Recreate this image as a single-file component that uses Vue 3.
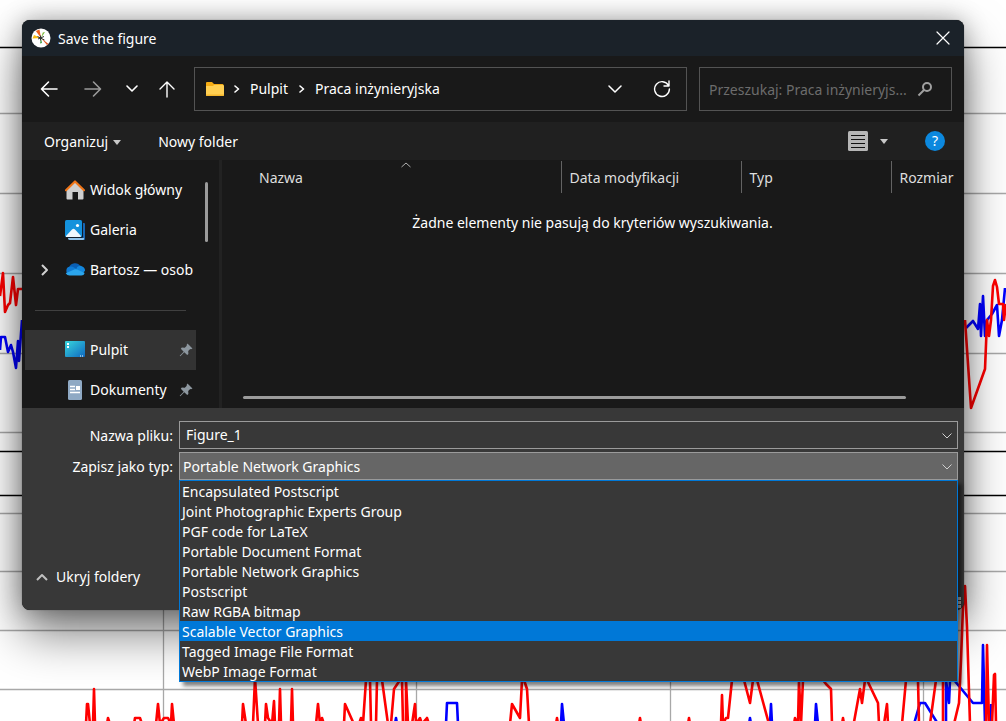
<script setup>
import { ref } from 'vue'

const fileName = ref('Figure_1')
const search = ref('')
const formats = [
  'Encapsulated Postscript',
  'Joint Photographic Experts Group',
  'PGF code for LaTeX',
  'Portable Document Format',
  'Portable Network Graphics',
  'Postscript',
  'Raw RGBA bitmap',
  'Scalable Vector Graphics',
  'Tagged Image File Format',
  'WebP Image Format',
]
const selected = ref('Portable Network Graphics')
const highlighted = ref('Scalable Vector Graphics')

const gridRows = [113, 193, 273, 353, 432, 513, 571, 630, 689]
const gridColumns = [163, 416, 670, 923]
const axisRows = [47, 451, 495]

const redLines = [
  '0,296 3,273 5,312 8,305 10,303 13,277 16,305 18,289 24,289',
  '965,320 971,408 985,369 987,320 989,336 991,320 993,286 995,280 997,287 999,304 1003,304 1004,320 1006,304',
  '86,724 87,704 88,704 90,724 93,724 94,689 95,724 107,724 108,718 110,724 134,724 135,718 140,718 142,724 156,724 158,704 160,724 164,718 168,718 171,724 172,704 174,724',
  '242,724 243,704 246,724 253,724 255,678 258,724 265,724 266,704 268,718 272,724 274,701 275,724 279,724 280,689 281,724 291,724 292,689 293,724',
  '316,724 318,704 320,724 322,718 324,724 344,724 345,704 353,722 359,724 361,718 363,724 366,680 370,680 371,724 376,724 377,680 382,680 388,724 391,724 394,689 400,680 402,680 403,724 406,724 406,680 408,724 412,724 415,704 416,724 420,718 422,724 427,718 429,724',
  '510,724 512,704 520,718 522,680 524,680 527,689 529,724 556,724 557,718 558,724',
  '639,724 640,718 641,724 688,724 689,718 690,724 721,724 722,695 723,724 726,718 728,718 732,680 744,680 750,703 753,680 757,680 769,724',
  '794,724 795,718 798,724 799,680 801,724 803,680 823,680 826,684 831,689 832,724 842,724 843,718 844,724 854,722 860,689 862,703 865,680 867,680 878,703 879,724 884,724 887,704 888,724 902,724 906,680 918,680 919,724 930,724 936,680 943,680 943,724',
  '954,724 959,703 961,660 963,607 965,586 967,627 970,724',
  '986,724 987,645 989,724 992,724 994,675 995,674 996,724',
]
const blueLines = [
  '0,350 1,337 5,337 8,352 11,345 13,352 16,368 18,341 19,361 22,320',
  '966,328 973,321 978,329 980,304 981,336 983,296 985,336 987,320 992,314 997,305 999,336 1002,320 1005,288',
  '395,724 396,718 397,724 446,724 447,703 457,703 458,724 561,724 562,704 564,724',
  '749,724 750,718 751,724 770,724 771,704 772,724 815,724 816,704 818,724',
  '914,724 920,703 925,703 938,724 946,724 946,680 949,703 950,680 954,680 973,703 982,703 983,645 985,724 990,724 991,704',
]
</script>

<template>
  <main class="desktop">
    <svg class="plot" viewBox="0 0 1006 721" preserveAspectRatio="xMidYMid slice" aria-hidden="true">
      <g stroke="#a8a8a8" stroke-width="1.300">
        <line v-for="y in gridRows" :key="'r' + y" x1="0" x2="1006" :y1="y + 0.5" :y2="y + 0.5" />
        <line v-for="x in gridColumns" :key="'c' + x" :x1="x + 0.5" :x2="x + 0.5" y1="495" y2="721" />
      </g>
      <g stroke="#000" stroke-width="1.300">
        <line v-for="y in axisRows" :key="'a' + y" x1="0" x2="1006" :y1="y + 0.5" :y2="y + 0.5" />
      </g>
      <g fill="none" stroke-width="2.600" stroke-linejoin="round">
        <polyline v-for="(p, i) in blueLines" :key="'b' + i" :points="p" stroke="#00f" />
        <polyline v-for="(p, i) in redLines" :key="'l' + i" :points="p" stroke="#f00" />
      </g>
    </svg>

    <section class="dialog" role="dialog" aria-labelledby="dialog-title">
      <header class="titlebar">
        <svg class="app-icon" viewBox="0 0 20 20" aria-hidden="true">
          <circle cx="10" cy="10" r="9.500" fill="#fff" />
          <path d="M10 10 4.800 3 8.500 1.400Z" fill="#f0601a" />
          <path d="M10 10 1.500 10.500 3 7Z" fill="#fbbd12" />
          <path d="M10 10 11.800 4.500 14 4Z" fill="#7cb83c" />
          <path d="m10 10 7.500 6-1.500 1Z" fill="#e2551c" />
          <path d="m10 10-1 5.500 2-.5Z" fill="#4aa04a" />
          <path d="m6.500 8.500 7 3.500M7 11l6-2.500M9.500 7.500v5" stroke="#333" stroke-width="1" fill="none" />
        </svg>
        <h1 id="dialog-title">Save the figure</h1>
        <button class="icon-button close" aria-label="Close">
          <svg width="14" height="14" viewBox="0 0 14 14"><path d="m1 1 12 12M13 1 1 13" /></svg>
        </button>
      </header>

      <nav class="navbar" aria-label="Location">
        <div class="history">
          <button class="icon-button" aria-label="Back">
            <svg width="18" height="18" viewBox="0 0 18 18"><path d="M17 9H2M8.500 2 1.500 9l7 7" stroke-width="1.600" /></svg>
          </button>
          <button class="icon-button dim" aria-label="Forward">
            <svg width="18" height="18" viewBox="0 0 18 18"><path d="M1 9h15M9.500 2l7 7-7 7" stroke-width="1.600" /></svg>
          </button>
          <button class="icon-button narrow" aria-label="Recent locations">
            <svg width="12" height="8" viewBox="0 0 12 8"><path d="m1 1 5 5 5-5" stroke-width="1.600" /></svg>
          </button>
          <button class="icon-button" aria-label="Up">
            <svg width="18" height="18" viewBox="0 0 18 18"><path d="M9 17V2M2 9l7-7 7 7" stroke-width="1.400" /></svg>
          </button>
        </div>
        <div class="address">
          <svg width="20" height="16" viewBox="0 0 20 16" aria-hidden="true">
            <path d="M1 2a1 1 0 0 1 1-1h5l2 2h8.500a1 1 0 0 1 1 1v9H1Z" fill="#f5ac14" />
            <path d="M1 5h7l1-1h9a1 1 0 0 1 1 1v9a1 1 0 0 1-1 1H2a1 1 0 0 1-1-1Z" fill="#ffcf52" />
            <path d="M1 13v1a1 1 0 0 0 1 1h16a1 1 0 0 0 1-1v-.5H1Z" fill="#f4b62c" />
          </svg>
          <svg class="crumb-arrow" width="6" height="8" viewBox="0 0 6 8"><path d="m1 1 3.500 3L1 7" stroke-width="1.600" /></svg>
          <a href="#pulpit">Pulpit</a>
          <svg class="crumb-arrow second" width="6" height="8" viewBox="0 0 6 8"><path d="m1 1 3.500 3L1 7" stroke-width="1.600" /></svg>
          <a href="#praca">Praca inżynieryjska</a>
          <button class="icon-button drop" aria-label="Previous locations">
            <svg width="14" height="9" viewBox="0 0 14 9"><path d="m1 1 6 6 6-6" stroke-width="1.500" /></svg>
          </button>
          <button class="icon-button refresh" aria-label="Refresh">
            <svg width="18" height="18" viewBox="0 0 18 18"><path d="M15.500 5.500A7.400 7.400 0 1 0 16.400 9M16 1v5h-5" stroke-width="1.400" /></svg>
          </button>
        </div>
        <label class="search">
          <input v-model="search" type="text" aria-label="Search" placeholder="Przeszukaj: Praca inżynieryjs..." />
          <svg width="16" height="16" viewBox="0 0 16 16"><circle cx="10" cy="6" r="4" /><path d="M7 9 1.500 14.500" /></svg>
        </label>
      </nav>

      <div class="toolbar">
        <button class="tool">Organizuj <span class="caret"></span></button>
        <button class="tool">Nowy folder</button>
        <button class="view" aria-label="Change view">
          <svg width="20" height="20" viewBox="0 0 20 20">
            <rect width="20" height="20" rx="1.500" fill="#b6b6b6" />
            <path d="M3 4.500h14M3 8.500h14M3 12.500h14M3 16.500h14" stroke="#111" />
          </svg>
          <span class="caret"></span>
        </button>
        <button class="help" aria-label="Help">?</button>
      </div>

      <div class="browser">
        <aside class="tree">
          <ul>
            <li>
              <svg class="expander"></svg>
              <svg class="glyph" viewBox="0 0 20 20" aria-hidden="true">
                <path d="M1.500 9 10 2l8.500 7v9.500a1 1 0 0 1-1 1H13V12H7.500v7.500h-5a1 1 0 0 1-1-1Z" fill="#cfcfcf" />
                <path d="M1 10.200 10 1.500l9 8.700" fill="none" stroke="#ef7417" stroke-width="2.200" stroke-linecap="round" stroke-linejoin="round" />
              </svg>
              <a href="#home">Widok główny</a>
            </li>
            <li>
              <svg class="expander"></svg>
              <svg class="glyph" viewBox="0 0 20 20" aria-hidden="true">
                <path d="M4 3h15a1 1 0 0 1 1 1v15a1 1 0 0 1-1 1H5a2 2 0 0 1-2-2Z" fill="#1767b5" />
                <path d="M3 18h16v1a1 1 0 0 1-1 1H5a2 2 0 0 1-2-2Z" fill="#8fc3ea" />
                <rect width="18" height="18" rx="1.500" fill="#111d2a" />
                <rect width="17" height="17" rx="1.500" fill="#1492dc" />
                <path d="m1 16 6-6.500a2 2 0 0 1 3 0l6 6.500-.5 1H1Z" fill="#eef7fd" />
                <circle cx="12.500" cy="5.500" r="1.600" fill="#fff" />
              </svg>
              <a href="#gallery">Galeria</a>
            </li>
            <li>
              <svg class="expander" viewBox="0 0 10 12"><path d="m2 1 5 5-5 5" /></svg>
              <svg class="glyph" viewBox="0 0 20 20" aria-hidden="true">
                <path d="M4 7.500a6.300 6.300 0 0 1 11.500-1l-4 5.500-8-1Z" fill="#0a5fb4" />
                <path d="M5 6.500a5 5 0 0 1 4 1l5 3-9 4.500a4.300 4.300 0 0 1 0-8.500Z" fill="#0f7bd4" />
                <path d="M14.500 5.800c3.500 0 5.500 2.500 5.500 4.700l-2 3-7-4a5 5 0 0 1 3.500-3.700Z" fill="#1387dd" />
                <path d="m.7 13.200 8-3.400c2-.9 3-.5 4 0l7 3.200a3.600 3.600 0 0 1-3.500 2.500H5a4.600 4.600 0 0 1-4.300-2.300Z" fill="#2ba5ec" />
              </svg>
              <a href="#onedrive">Bartosz — osob</a>
            </li>
            <li class="divider" role="separator"></li>
            <li class="current">
              <svg class="expander"></svg>
              <svg class="glyph" viewBox="0 0 20 20" aria-hidden="true">
                <defs>
                  <linearGradient id="desk" x1="0" y1="0" x2="1" y2="1">
                    <stop offset="0" stop-color="#38d6dc" /><stop offset="1" stop-color="#0f68c0" />
                  </linearGradient>
                </defs>
                <rect y="1" width="20" height="16" rx="1" fill="url(#desk)" />
                <path d="M2 3h2v2H2Zm0 3h2v2H2Z" fill="#fff" />
                <path d="M15 16h1m1 0h1" stroke="#fff" />
              </svg>
              <a href="#pulpit">Pulpit</a>
              <svg class="pin" viewBox="0 0 14 14"><path d="m8.500.500 5 5-1.500.8-.8-.2-2 2 .2 3-1.200 1-2.900-2.900-4 4-.6-.5 4-4-2.900-2.900 1-1.200 3 .2 2-2-.2-.8Z" /></svg>
            </li>
            <li>
              <svg class="expander"></svg>
              <svg class="glyph" viewBox="0 0 20 20" aria-hidden="true">
                <rect x="3" width="14" height="20" rx="1.500" fill="#8fa9c4" />
                <path d="M5 6.500h5M5 9.500h5M5 12.500h10" stroke="#fff" stroke-width="1.300" />
                <rect x="11" y="6" width="4" height="4" fill="#fff" />
              </svg>
              <a href="#documents">Dokumenty</a>
              <svg class="pin" viewBox="0 0 14 14"><path d="m8.500.500 5 5-1.500.8-.8-.2-2 2 .2 3-1.200 1-2.900-2.900-4 4-.6-.5 4-4-2.900-2.900 1-1.200 3 .2 2-2-.2-.8Z" /></svg>
            </li>
          </ul>
          <div class="tree-scroll"></div>
        </aside>

        <div class="files">
          <svg class="sort" width="12" height="6" viewBox="0 0 12 6"><path d="m1.500 5 4.500-4 4.500 4" /></svg>
          <table>
            <thead>
              <tr>
                <th scope="col">Nazwa</th>
                <th scope="col" class="date">Data modyfikacji</th>
                <th scope="col" class="type">Typ</th>
                <th scope="col" class="size">Rozmiar</th>
              </tr>
            </thead>
          </table>
          <p class="empty">Żadne elementy nie pasują do kryteriów wyszukiwania.</p>
          <div class="file-scroll"></div>
        </div>
      </div>

      <form class="details" @submit.prevent>
        <div class="fields">
          <label for="file-name">Nazwa pliku:</label>
          <div class="combo">
            <input id="file-name" v-model="fileName" type="text" />
            <svg class="chevron" width="10" height="6" viewBox="0 0 10 6"><path d="m.5.5 4.500 4.500L9.500.500" /></svg>
          </div>
          <label for="file-type">Zapisz jako typ:</label>
          <div class="combo open">
            <select id="file-type" v-model="selected">
              <option v-for="f in formats" :key="f">{{ f }}</option>
            </select>
            <svg class="chevron" width="10" height="6" viewBox="0 0 10 6"><path d="m.5.5 4.500 4.500L9.500.500" /></svg>
            <ul class="list" role="listbox" aria-label="Zapisz jako typ">
              <li
                v-for="f in formats"
                :key="f"
                role="option"
                :aria-selected="f === highlighted"
                :class="{ active: f === highlighted }"
                @mouseenter="highlighted = f"
                @click="selected = f"
              >{{ f }}</li>
            </ul>
          </div>
        </div>
        <button type="button" class="fold">
          <svg width="12" height="8" viewBox="0 0 12 8"><path d="m1 7 5-5 5 5" /></svg>
          Ukryj foldery
        </button>
        <span class="grip"><i></i><i></i><i></i></span>
      </form>
    </section>
  </main>
</template>

<style>
body {
  background: #fff;
  overflow: hidden;
}
</style>

<style scoped>
* {
  box-sizing: border-box;
}
.desktop {
  position: relative;
  min-height: 100vh;
  padding: 20px 42px 0 22px;
  font-family: "Noto Sans", "Open Sans", sans-serif;
  font-size: 14px;
  line-height: 20px;
  color: #fff;
}
.plot {
  position: absolute;
  inset: 0;
  width: 100%;
  height: 100%;
}
.dialog {
  position: relative;
  border-radius: 8px;
  background: #191919;
  box-shadow: 0 0 1px rgba(0, 0, 0, 0.6), 0 0 24px rgba(0, 0, 0, 0.3), 0 24px 48px rgba(0, 0, 0, 0.5);
}
button {
  font: inherit;
  color: inherit;
  background: none;
  border: 0;
  padding: 0;
}
svg path {
  stroke-linejoin: round;
}
a {
  color: inherit;
  text-decoration: none;
  white-space: nowrap;
}
ul {
  list-style: none;
  margin: 0;
  padding: 0;
}
.titlebar {
  display: flex;
  align-items: center;
  height: 36px;
  padding: 0 9px;
  gap: 7px;
  border-radius: 8px 8px 0 0;
  background: #1b2229;
}
.app-icon {
  width: 20px;
  height: 20px;
}
h1 {
  flex: 1;
  margin: 0;
  padding-top: 2px;
  font-size: 14px;
  font-weight: 400;
}
.icon-button {
  display: flex;
  align-items: center;
  justify-content: center;
  width: 24px;
  height: 24px;
}
.icon-button svg,
.crumb-arrow {
  fill: none;
  stroke: #fff;
  stroke-linecap: round;
}
.close svg {
  stroke-width: 1.2;
}
.dim svg {
  stroke: #9a9a9a;
}
.navbar {
  display: flex;
  align-items: center;
  height: 66px;
  padding: 0 12px 0 15px;
  gap: 12px;
}
.history {
  display: flex;
  align-items: center;
  gap: 20px;
  width: 145px;
}
.history .narrow {
  width: 14px;
  margin-right: -4px;
}
.address {
  flex: 1;
  display: flex;
  align-items: center;
  height: 44px;
  padding: 0 12px 0 10px;
  border: 1px solid #535353;
}
.crumb-arrow {
  margin: 0 10px 0 9px;
}
.crumb-arrow.second {
  margin-left: 11px;
}
.address .drop {
  margin-left: auto;
}
.address .refresh {
  margin-left: 23px;
}
.search {
  display: flex;
  align-items: center;
  width: 253px;
  height: 44px;
  padding: 0 18px 0 9px;
  border: 1px solid #535353;
}
.search input {
  flex: 1;
  min-width: 0;
  padding: 2px 0 0;
  border: 0;
  outline: 0;
  background: none;
  font: inherit;
  color: #fff;
}
.search input::placeholder {
  color: #6c6c6c;
  opacity: 1;
}
.search svg {
  fill: none;
  stroke: #a0a0a0;
  stroke-width: 2;
}
.toolbar {
  display: flex;
  align-items: center;
  height: 38px;
  padding: 0 19px 0 22px;
  gap: 37px;
  background: #202020;
}
.tool {
  display: flex;
  align-items: center;
  gap: 5px;
  padding-top: 2px;
}
.caret {
  border: 4px solid transparent;
  border-top: 5px solid #c8c8c8;
  border-bottom: 0;
}
.view {
  display: flex;
  align-items: center;
  gap: 12px;
  margin-left: auto;
}
.help {
  width: 20px;
  height: 20px;
  border-radius: 50%;
  background: #0c88de;
  font-size: 14px;
  line-height: 20px;
}
.browser {
  display: flex;
  height: 248px;
}
.tree {
  display: flex;
  width: 200px;
  padding: 10px 0 0 3px;
  border-right: 3px solid #222;
  overflow: hidden;
}
.tree ul {
  width: 171px;
}
.tree li {
  display: flex;
  align-items: center;
  height: 40px;
  padding-right: 3px;
  overflow: hidden;
}
.tree li a {
  flex: 1;
}
.tree li.divider {
  padding: 0 10px;
}
.divider::before {
  content: "";
  width: 100%;
  height: 1px;
  background: #404040;
}
.tree li.current {
  background: #333;
}
.expander {
  flex: none;
  width: 10px;
  height: 12px;
  margin: 0 15px 0 15px;
  fill: none;
  stroke: #d0d0d0;
  stroke-width: 2;
}
.glyph {
  flex: none;
  width: 20px;
  height: 20px;
  margin-right: 5px;
}
.pin {
  flex: none;
  width: 14px;
  height: 14px;
  fill: #8d979f;
}
.tree-scroll {
  width: 3px;
  height: 60px;
  margin: 12px 0 0 9px;
  border-radius: 2px;
  background: #9b9b9b;
}
.files {
  position: relative;
  flex: 1;
  display: flex;
  flex-direction: column;
  padding-left: 29px;
}
.sort {
  position: absolute;
  top: 2px;
  left: 24%;
  fill: none;
  stroke: #b0b0b0;
}
table {
  width: 100%;
  margin-top: 1px;
  table-layout: fixed;
  border-collapse: collapse;
}
th {
  height: 32px;
  padding: 2px 0 0 8px;
  font-weight: 400;
  text-align: left;
  color: #dedede;
  white-space: nowrap;
}
th + th {
  border-left: 1px solid #636363;
}
.date {
  width: 180px;
}
.type {
  width: 150px;
}
.size {
  width: 73px;
}
.empty {
  margin: 20px 30px 0 0;
  text-align: center;
}
.file-scroll {
  height: 3px;
  margin: auto 58px 9px -8px;
  border-radius: 2px;
  background: #9b9b9b;
}
.details {
  position: relative;
  padding: 13px 6px 19px 0;
  border-radius: 0 0 8px 8px;
  background: #383838;
}
.fields {
  display: grid;
  grid-template-columns: 151px 1fr;
  gap: 3px 6px;
  align-items: center;
}
.fields label {
  padding-top: 2px;
  text-align: right;
}
.combo {
  position: relative;
}
.combo input,
.combo select {
  display: block;
  width: 100%;
  height: 28px;
  padding: 0 24px 2px 6px;
  border: 1px solid #9b9b9b;
  border-radius: 0;
  outline: 0;
  appearance: none;
  background: #383838;
  font: inherit;
  color: #fff;
}
.combo select {
  padding: 2px 24px 0 3px;
  background: #666;
}
.chevron {
  position: absolute;
  top: 12px;
  right: 6px;
  fill: none;
  stroke: #d0d0d0;
  pointer-events: none;
}
.list {
  position: absolute;
  z-index: 2;
  top: 100%;
  left: 0;
  right: 0;
  border: 1px solid #0078d7;
  background: #383838;
  box-shadow: 4px 4px 4px rgba(0, 0, 0, 0.5);
}
.list li {
  height: 20px;
  padding-left: 2px;
  line-height: 22px;
}
.list li.active {
  background: #0078d7;
}
.fold {
  display: flex;
  align-items: center;
  gap: 8px;
  height: 28px;
  margin: 83px 0 0 14px;
}
.fold svg {
  fill: none;
  stroke: #c0c0c0;
  stroke-width: 2;
}
.grip {
  position: absolute;
  right: 3px;
  bottom: 2px;
  display: grid;
  gap: 1px;
}
.grip i {
  width: 3px;
  height: 3px;
  background: #b8b8b8;
}
</style>
